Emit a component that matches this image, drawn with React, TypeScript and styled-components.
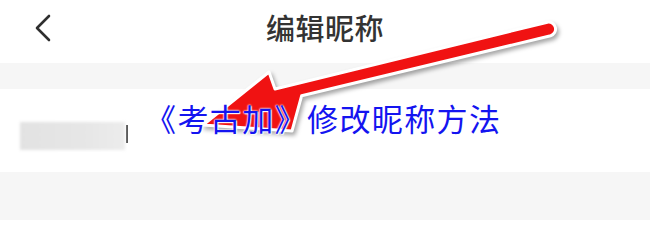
import React from 'react'
import styled, { createGlobalStyle } from 'styled-components'

const GlobalStyle = createGlobalStyle`
  html, body {
    margin: 0;
    padding: 0;
    background: #ffffff;
  }
  body {
    font-family: "Noto Sans CJK SC", "Noto Sans", sans-serif;
  }
`

export default function App() {
  return (
    <>
      <GlobalStyle />
      <Screen>
        <Header>
          <BackButton aria-label="返回">
            <svg width="18" height="28" viewBox="0 0 18 28">
              <path d="M15 2 L3 14 L15 26" fill="none" stroke="#2f2f2f" strokeWidth="2.6" strokeLinecap="round" strokeLinejoin="round" />
            </svg>
          </BackButton>
          <Title>编辑昵称</Title>
          <span />
        </Header>
        <Band $height={26} />
        <NameRow>
          <BlurredName />
          <Cursor />
        </NameRow>
        <Band $height={48} />

        <ArrowOverlay width="650" height="220" viewBox="0 0 650 220">
          <path
            d="M547.4 22.2 L275 89 L269 72 L203 125 L292 131 L301.6 95.8 L550.6 35.8 A7 7 0 0 0 547.4 22.2 Z"
            fill="#f01212"
            stroke="#ffffff"
            strokeWidth="3"
            strokeLinejoin="round"
          />
        </ArrowOverlay>
        <Caption>《考古加》修改昵称方法</Caption>
      </Screen>
    </>
  )
}

const Screen = styled.div`
  position: relative;
  width: 650px;
  height: 220px;
  overflow: hidden;
  display: flex;
  flex-direction: column;
  background: #ffffff;
`

const Header = styled.div`
  height: 63px;
  padding-bottom: 8px;
  box-sizing: border-box;
  display: grid;
  grid-template-columns: 1fr auto 1fr;
  align-items: center;
`

const BackButton = styled.div`
  padding-left: 34px;
  display: flex;
  align-items: center;
`

const Title = styled.div`
  font-size: 29px;
  font-weight: 500;
  color: #333333;
  line-height: 1;
  letter-spacing: 0.5px;
`

const Band = styled.div<{ $height: number }>`
  height: ${({ $height }) => $height}px;
  background: #f6f6f6;
`

const NameRow = styled.div`
  height: 83px;
  display: flex;
  align-items: center;
  padding: 10px 0 0 20px;
  box-sizing: border-box;
`

const BlurredName = styled.div`
  width: 105px;
  height: 28px;
  background: linear-gradient(90deg, #e2e2e2, #e6e6e6 60%, #ececec);
  filter: blur(1.5px);
`

const Cursor = styled.div`
  width: 2px;
  height: 18px;
  margin-left: 1px;
  margin-top: -4px;
  background: #555555;
`

const ArrowOverlay = styled.svg`
  position: absolute;
  left: 0;
  top: 0;
  z-index: 1;
  filter: drop-shadow(2px 3px 2px rgba(0, 0, 0, 0.35));
`

const Caption = styled.div`
  position: absolute;
  left: 145px;
  top: 102px;
  z-index: 2;
  font-size: 31px;
  letter-spacing: 1.4px;
  line-height: 1;
  color: #1414f0;
  white-space: nowrap;
  text-shadow: 0 0 2px #ffffff, 0 0 2px #ffffff, 1px 1px 1px #ffffff;
`
